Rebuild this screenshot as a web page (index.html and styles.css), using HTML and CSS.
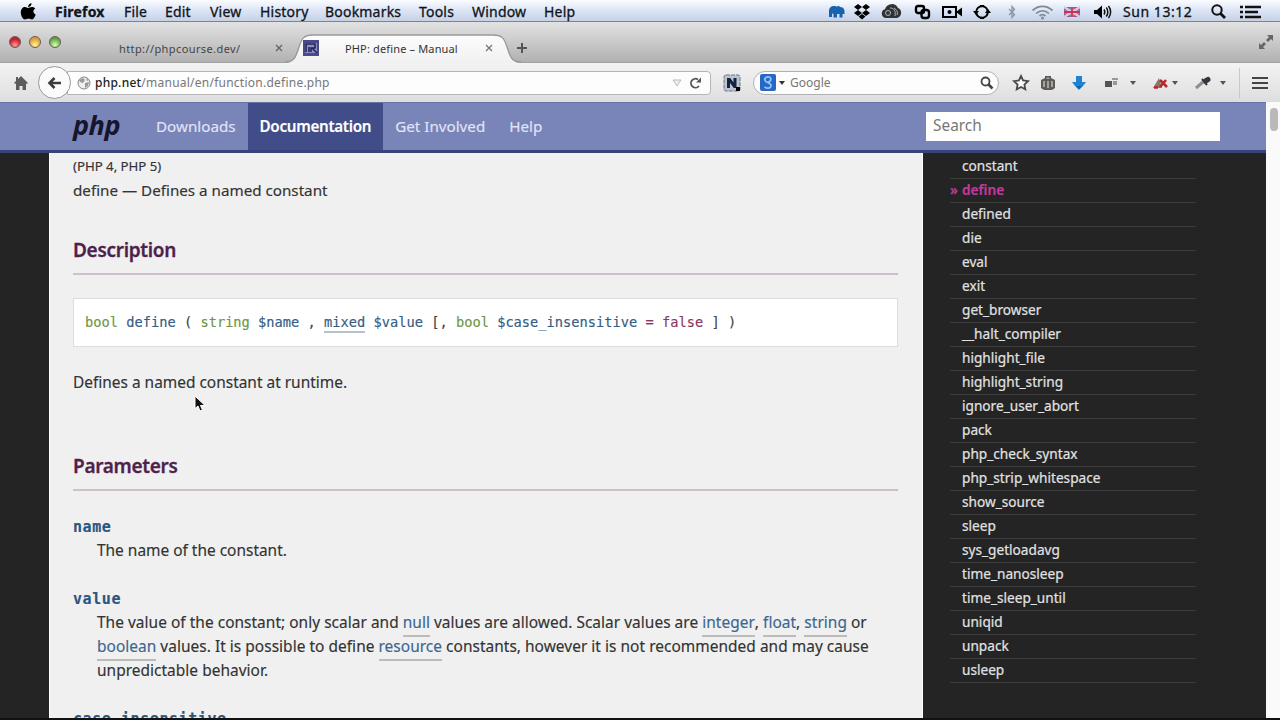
FILE: index.html
```html
<!DOCTYPE html>
<html lang="en">
<head>
<meta charset="UTF-8" />
<meta name="viewport" content="width=device-width, initial-scale=1" />
<title>PHP: define - Manual</title>
<link rel="stylesheet" href="styles.css">
</head>
<body>
<div class="screen">

  <!-- Mac menu bar -->
  <div class="menubar">
    <svg class="apple" width="16" height="18" viewBox="0 0 16 18"><path d="M8 5C9 5 10 4 12 4c1.500 0 2.600.7 3.200 1.600-2.600 1.600-2.200 5 .5 6C15 14 13.500 16.500 12 16.500c-1.300 0-1.800-.7-3.500-.7s-2.200.7-3.500.7C3 16.500.8 13 .8 9.500S2.800 4 5 4c1.500 0 2.200 1 3 1zM8 4c0-2 1.500-3.700 3.500-3.800C11.700 2.200 10 4 8 4z"/></svg>
    <nav class="menus">
      <b>Firefox</b><span>File</span><span>Edit</span><span>View</span><span>History</span><span>Bookmarks</span><span>Tools</span><span>Window</span><span>Help</span>
    </nav>
    <div class="status">
      <svg width="18" height="16" viewBox="0 0 18 16"><path fill="#1763ae" d="M1 13V7c0-3 2-5 5-5 1.500 0 2 .5 3 .5C10 1.500 11.500 2 12 3c3 0 4.500 2 4.500 4.500V10h-2v3.500h-3V10H9v3.500H5.500V10L4 9.500V13z"/></svg>
      <svg width="18" height="16" viewBox="0 0 18 16"><path d="M5 0l4 3-4 3-4-3zM13 0l4 3-4 3-4-3zM5 6l4 3-4 3-4-3zM13 6l4 3-4 3-4-3zM9 10l3.500 2.500L9 15.500l-3.500-3z"/></svg>
      <svg width="21" height="16" viewBox="0 0 21 16"><path fill="#333" d="M5 14a4.500 4.500 0 0 1-1-8.800A7 7 0 0 1 17 4a5.300 5.300 0 0 1-1 10z"/><circle cx="7" cy="9" r="2.500" fill="none" stroke="#aab4c6"/><path fill="none" stroke="#aab4c6" d="M9 4c4 0 6 3 5 8M13 4c3 2 4 4 3 7"/></svg>
      <svg width="17" height="16" viewBox="0 0 17 16"><g fill="none" stroke="#000" stroke-width="2.400"><rect x="2" y="2" width="8" height="7" rx="2"/><rect x="7.500" y="6" width="7.500" height="8" rx="2.500"/></g></svg>
      <svg width="21" height="16" viewBox="0 0 21 16"><rect x="1" y="3" width="13" height="10" fill="none" stroke="#000" stroke-width="2"/><circle cx="7.500" cy="8" r="2"/><path d="M14 8l6-4.500v9z"/></svg>
      <svg width="18" height="16" viewBox="0 0 18 16"><circle cx="9" cy="8" r="5.800" fill="none" stroke="#000" stroke-width="2"/><path d="M0 7h6l-3 4zM12 9h6l-3-4z"/><path d="M7 1h4v2H7zM7 13h4v2H7z"/></svg>
      <svg width="10" height="16" viewBox="0 0 10 16"><path fill="none" stroke="#8a94a5" stroke-width="1.300" d="M2 5l5.500 5.500L5 13.500V2.500l2.500 3L2 11"/></svg>
      <svg width="23" height="16" viewBox="0 0 23 16"><g fill="none" stroke="#7f8997" stroke-width="1.700"><path d="M1.500 6.500c6-5.500 14-5.500 20 0M5 9.500c4-3.700 9-3.700 13 0M8.500 12c2-1.800 4-1.800 6 0"/></g><circle cx="11.500" cy="14" r="1.500" fill="#7f8997"/></svg>
      <svg width="18" height="12" viewBox="0 0 18 12"><rect x="1" y="1" width="16" height="10" rx="1" fill="#71629c"/><path stroke="#e4c6d6" stroke-width="2.500" d="M1 1l16 10M17 1L1 11M9 1v10M1 6h16"/><path stroke="#cb3056" stroke-width="1.800" d="M9 1v10M1 6h16"/></svg>
      <svg width="19" height="16" viewBox="0 0 19 16"><path d="M1 6h3l5-4.500v13L4 10H1z"/><path fill="none" stroke="#111" stroke-width="1.500" d="M11 5.500c1 1.500 1 3.500 0 5M13.300 3.500c2 2.500 2 6.500 0 9M15.500 2c2.800 3.500 2.800 8.500 0 12"/></svg>
      <span class="clock">Sun 13:12</span>
      <svg width="17" height="17" viewBox="0 0 17 17"><circle cx="7" cy="7" r="4.700" fill="none" stroke="#111" stroke-width="2"/><path stroke="#111" stroke-width="2.800" d="M10.500 10.500l4.500 4.500"/></svg>
      <svg width="22" height="16" viewBox="0 0 22 16"><path stroke="#111" stroke-width="2.400" d="M0 3h3M5 3h16M0 8h3M5 8h13M0 13h3M5 13h16"/></svg>
    </div>
  </div>

  <!-- Tab strip -->
  <div class="tabstrip">
    <div class="lights"><i class="red"></i><i class="yellow"></i><i class="green"></i></div>
    <div class="tab-idle"><span>http://phpcourse.dev/</span><svg width="8" height="8" viewBox="0 0 8 8"><path stroke="#666" stroke-width="1.400" d="M1 1l6 6M7 1L1 7"/></svg></div>
    <div class="tab-active">
      <svg class="tab-shape" width="236" height="30" viewBox="0 0 236 30"><defs><linearGradient id="tabfill" x2="0" y2="1"><stop stop-color="#fcfcfc"/><stop offset="1" stop-color="#f1f1f1"/></linearGradient></defs><path fill="url(#tabfill)" d="M0 30C10 30 11 23 14 14 17 5 19 2 28 2H208c9 0 11 3 14 12 3 9 4 16 14 16z"/><path fill="none" stroke="#999" stroke-width="1.300" d="M0 29C10 29 11 23 14 14 17 5 19 2 28 2H208c9 0 11 3 14 12 3 9 4 15 14 15"/></svg>
      <div class="tab-content">
        <svg width="16" height="16" viewBox="0 0 16 16"><rect width="16" height="16" fill="#4a4a88"/><rect x="2" y="3" width="12" height="10" fill="#8c90c0"/><path fill="none" stroke="#25255a" stroke-width="1.600" d="M3 12V4h9v4H8v4M6 7v5M9 8l5 5"/></svg>
        <span class="tab-title">PHP: define – Manual</span>
        <svg width="8" height="8" viewBox="0 0 8 8"><path stroke="#777" stroke-width="1.300" d="M1 1l6 6M7 1L1 7"/></svg>
      </div>
    </div>
    <svg class="newtab" width="12" height="12" viewBox="0 0 12 12"><path stroke="#555" stroke-width="2" d="M6 1v10M1 6h10"/></svg>
    <svg class="fullscreen" width="16" height="16" viewBox="0 0 16 16"><path fill="#666" d="M15 1v6l-2-2-3 3-2-2 3-3-2-2zM1 15V9l2 2 3-3 2 2-3 3 2 2z"/></svg>
  </div>

  <!-- Navigation toolbar -->
  <div class="toolbar">
    <svg class="home" width="16" height="16" viewBox="0 0 16 16"><path fill="#5c5c5c" d="M8 1l7 7-1.200 1L13 8.300V15H9.500v-4h-3v4H3V8.300L2.200 9 1 8l2-2V2h2v2z"/></svg>
    <div class="back"><svg width="16" height="16" viewBox="0 0 16 16"><path fill="none" stroke="#3c3c3c" stroke-width="2.600" d="M7.500 3L2.500 8l5 5M3 8h11"/></svg></div>
    <div class="urlbar">
      <svg width="14" height="14" viewBox="0 0 14 14"><circle cx="7" cy="7" r="6" fill="#eee" stroke="#888"/><path fill="#999" d="M2 4l4-2 2 2-2 3-3-1zM8 7l4-1-1 4-3 2zM9 2l3 2-2 1z"/></svg>
      <span class="url"><b>php.net</b>/manual/en/function.define.php</span>
      <svg class="drop" width="10" height="8" viewBox="0 0 10 8"><path fill="#eee" stroke="#bbb" d="M1 1h8L5 7z"/></svg>
      <svg width="14" height="14" viewBox="0 0 14 14"><path fill="none" stroke="#555" stroke-width="1.800" d="M10 3.500a4.500 4.500 0 1 0 1 6.500"/><path fill="#555" d="M8 6.500L13 1.500v5z"/></svg>
    </div>
    <svg class="ext" width="18" height="18" viewBox="0 0 18 18"><rect x="1" y="1" width="16" height="16" rx="2" fill="#bcc4d1" stroke="#6d7482" stroke-dasharray="4 1"/><path fill="none" stroke="#142340" stroke-width="3" d="M5.500 4v10M12 4v10M6 5l6 8"/><path d="M13 13h4v4h-4z"/></svg>
    <div class="searchbar">
      <svg width="16" height="17" viewBox="0 0 16 17"><rect width="16" height="17" rx="2" fill="#2866c7"/><path fill="none" stroke="#8fc4f3" stroke-width="1.800" d="M10.500 3.500C7 2 4 4 5 6.500s6 2 6 5-4 3.500-6.500 1.500M9 3c3 1 2 5-1 5"/></svg>
      <svg width="6" height="4" viewBox="0 0 6 4"><path fill="#333" d="M0 0h6L3 4z"/></svg>
      <span>Google</span>
      <svg width="14" height="14" viewBox="0 0 14 14"><circle cx="5.500" cy="5.500" r="4" fill="none" stroke="#444" stroke-width="1.800"/><path stroke="#444" stroke-width="2.600" d="M8.500 8.500l4 4"/></svg>
    </div>
    <div class="tools">
      <svg width="18" height="18" viewBox="0 0 18 18"><path fill="#fafafa" stroke="#4a4a4a" stroke-width="1.800" d="M9 2l2.100 4.500 4.900.6-3.600 3.400.9 4.900L9 13l-4.300 2.400.9-4.900L2 7.100l4.900-.6z"/></svg>
      <svg width="16" height="16" viewBox="0 0 16 16"><path fill="#5d5b58" d="M5 1h6v2l4 2v8l-3 2H4l-3-2V5l4-2z"/><path fill="#a5a29d" d="M6.500 2.500h3V4h-3zM3 6h2v6H3zM7 6h2v7H7zM11 6h2v6h-2z"/></svg>
      <svg width="16" height="16" viewBox="0 0 16 16"><path fill="#1e83d2" d="M5 1h6v6h4l-3 4-4 4-4-4-3-4h4z"/><path fill="#1264a9" d="M5 11h6l-3 3z"/></svg>
      <svg width="16" height="14" viewBox="0 0 16 14"><path fill="#555" d="M1 5h7v6H1z"/><path fill="#999" d="M8 2h6v2H8zM9 5h4v4H9z"/></svg>
      <svg width="6" height="4" viewBox="0 0 6 4"><path fill="#555" d="M0 0h6L3 4z"/></svg>
      <svg width="18" height="15" viewBox="0 0 18 15"><path fill="#8a7667" d="M1 13L7 3l3 10z"/><path stroke="#b6272b" stroke-width="2.600" d="M8 5l7 7M14 5l-6 7M2 12.500h4"/></svg>
      <svg width="6" height="4" viewBox="0 0 6 4"><path fill="#555" d="M0 0h6L3 4z"/></svg>
      <svg width="18" height="16" viewBox="0 0 18 16"><path stroke="#8a8f97" stroke-width="3" d="M2 13l7-6"/><path stroke="#35373b" stroke-width="5" stroke-linecap="round" d="M11.500 6L14 4.500"/><path stroke="#35373b" stroke-width="2" d="M8 4l5 6"/></svg>
      <svg width="6" height="4" viewBox="0 0 6 4"><path fill="#555" d="M0 0h6L3 4z"/></svg>
      <i class="divider"></i>
      <svg width="16" height="14" viewBox="0 0 16 14"><path stroke="#444" stroke-width="2" d="M0 2h16M0 7h16M0 12h16"/></svg>
    </div>
  </div>

  <!-- Page -->
  <div class="viewport">
    <div class="site">
      <header class="site-header">
        <span class="logo">php</span>
        <a>Downloads</a>
        <a class="current">Documentation</a>
        <a>Get Involved</a>
        <a>Help</a>
        <div class="site-search">Search</div>
      </header>
      <div class="page">
        <main class="manual">
          <p class="version">(PHP 4, PHP 5)</p>
          <p class="purpose">define — Defines a named constant</p>
          <h3 class="description">Description</h3>
          <div class="synopsis"><span class="type">bool</span> <span class="name">define</span> ( <span class="type">string</span> <span class="param">$name</span> , <a>mixed</a> <span class="param">$value</span> [, <span class="type">bool</span> <span class="param">$case_insensitive</span> <span class="init">= false</span> ] )</div>
          <p class="runtime">Defines a named constant at runtime.</p>
          <h3 class="parameters">Parameters</h3>
          <dl>
            <dt>name</dt>
            <dd>The name of the constant.</dd>
            <dt>value</dt>
            <dd class="long">The value of the constant; only scalar and <a>null</a> values are allowed. Scalar values are <a>integer</a>, <a>float</a>, <a>string</a> or<br><a>boolean</a> values. It is possible to define <a>resource</a> constants, however it is not recommended and may cause<br>unpredictable behavior.</dd>
            <dt>case_insensitive</dt>
          </dl>
        </main>
        <aside class="sidebar">
          <ul>
            <li>constant</li>
            <li class="current">define</li>
            <li>defined</li>
            <li>die</li>
            <li>eval</li>
            <li>exit</li>
            <li>get_browser</li>
            <li>__halt_compiler</li>
            <li>highlight_file</li>
            <li>highlight_string</li>
            <li>ignore_user_abort</li>
            <li>pack</li>
            <li>php_check_syntax</li>
            <li>php_strip_whitespace</li>
            <li>show_source</li>
            <li>sleep</li>
            <li>sys_getloadavg</li>
            <li>time_nanosleep</li>
            <li>time_sleep_until</li>
            <li>uniqid</li>
            <li>unpack</li>
            <li>usleep</li>
          </ul>
        </aside>
      </div>
    </div>
    <div class="scrollbar"><i></i></div>
  </div>

  <svg class="cursor" width="12" height="18" viewBox="0 0 12 18"><path fill="#111" stroke="#fff" d="M1 1v12.500l3-2.500 2 5 2.500-1-2-4.500H11z"/></svg>
</div>
</body>
</html>
```
FILE: styles.css
```css
* {
  margin: 0;
  padding: 0;
  box-sizing: border-box;
}

body {
  width: 1280px;
  height: 720px;
  overflow: hidden;
  background: #111;
  font-family: "Noto Sans", "Open Sans", sans-serif;
}

svg {
  display: block;
  flex-shrink: 0;
}

.screen {
  position: relative;
  display: flex;
  flex-direction: column;
  height: 720px;
  padding-bottom: 2px;
}

/* Menu bar */
.menubar {
  display: flex;
  align-items: center;
  height: 22px;
  padding: 2px 18px 0 20px;
  background: linear-gradient(#fafcff 0%, #dce5f5 50%, #c6d1e5 100%);
  border-bottom: 1px solid #7b8492;
  font-size: 14px;
  color: #10141b;
}

.apple {
  width: 16px;
  margin-right: 19px;
}

.menus {
  display: grid;
  grid-template-columns: 69px 41px 45px 50px 65px 94px 53px 72px 60px;
  line-height: 20px;
  letter-spacing: 0.2px;
  white-space: nowrap;
  -webkit-text-stroke: 0.3px #10141b;
}

.status {
  display: grid;
  grid-template-columns: 25px 28px 33px 28px 31px 34px 24px 32px 30px 30px 87px 30px 22px;
  align-items: center;
  margin-left: auto;
}

.clock {
  line-height: 20px;
  letter-spacing: 0.55px;
  white-space: nowrap;
  -webkit-text-stroke: 0.3px #10141b;
}

/* Tab strip */
.tabstrip {
  display: flex;
  align-items: flex-end;
  height: 41px;
  background: linear-gradient(#e2e2e2, #b1b1b1);
  border-bottom: 1px solid #a0a0a0;
  font-size: 11px;
  color: #444;
}

.lights {
  display: flex;
  gap: 8px;
  padding: 0 0 14px 9px;
}

.lights i {
  width: 12px;
  height: 12px;
  border-radius: 50%;
  border: 1px solid #6b5a58;
}

.lights .red {
  background: radial-gradient(circle at 50% 80%, #ff9c9c, #c8212d 60%);
}

.lights .yellow {
  background: radial-gradient(circle at 50% 80%, #fff3a0, #dc9a35 70%);
}

.lights .green {
  background: radial-gradient(circle at 50% 80%, #dcffb0, #5d9f45 70%);
}

.tab-idle {
  display: flex;
  align-items: center;
  justify-content: space-between;
  width: 164px;
  height: 28px;
  margin-left: 58px;
}

.tab-idle span {
  letter-spacing: 0.4px;
}

.tab-active {
  position: relative;
  width: 236px;
  height: 30px;
  margin: 0 0 -1px 2px;
}

.tab-shape {
  position: absolute;
  top: 0;
  left: 0;
}

.tab-content {
  position: relative;
  display: flex;
  align-items: center;
  height: 30px;
  padding: 0 0 0 18px;
}

.tab-title {
  width: 140px;
  margin-left: 26px;
  letter-spacing: 0.15px;
  white-space: nowrap;
  color: #333;
}

.newtab {
  margin: 0 0 8px -5px;
}

.fullscreen {
  margin: 0 6px 12px auto;
}

/* Toolbar */
.toolbar {
  display: flex;
  align-items: center;
  height: 39px;
  background: linear-gradient(#f3f3f3, #dedede);
  font-size: 11.5px;
}

.home {
  margin-left: 13px;
}

.back {
  display: flex;
  align-items: center;
  justify-content: center;
  width: 33px;
  height: 33px;
  margin-left: 9px;
  background: #fbfbfb;
  border: 1px solid #999;
  border-radius: 50%;
  z-index: 1;
}

.urlbar {
  display: flex;
  align-items: center;
  width: 644px;
  height: 24px;
  margin-left: -4px;
  padding: 0 8px 0 9px;
  background: #fdfdfd;
  border: 1px solid #b5b5b5;
  border-radius: 0 4px 4px 0;
}

.url {
  margin-left: 4px;
  font-size: 12px;
  color: #777;
  letter-spacing: 0.24px;
}

.url b {
  color: #222;
  font-weight: 500;
}

.drop {
  margin: 0 6px 0 auto;
}

.ext {
  margin: 0 12px 0 12px;
}

.searchbar {
  display: flex;
  align-items: center;
  width: 246px;
  height: 24px;
  padding: 0 4px 0 6px;
  background: #fdfdfd;
  border: 1px solid #b0b0b0;
  border-radius: 12px;
  font-size: 12px;
  color: #777;
}

.searchbar svg + svg {
  margin: 0 5px 0 3px;
}

.searchbar svg:last-child {
  margin-left: auto;
}

.tools {
  display: grid;
  grid-template-columns: 28px 31px 33px 26px 22px 20px 22px 26px 19px 13px 16px;
  align-items: center;
  padding-left: 13px;
}

.divider {
  width: 1px;
  height: 30px;
  background: #c8c8c8;
}

/* Site */
.viewport {
  display: flex;
  height: 616px;
}

.site {
  width: 1266px;
  height: 616px;
  overflow: hidden;
  background: #242424;
}

.site-header {
  display: flex;
  align-items: center;
  height: 51px;
  padding-left: 73px;
  background: #7984b9;
  border-top: 1px solid #6873a9;
  border-bottom: 3px solid #38437b;
  font-size: 15.2px;
  color: #e0e4f5;
}

.logo {
  width: 71px;
  margin-top: -5px;
  font: italic bold 27px "Open Sans", sans-serif;
  letter-spacing: -0.5px;
  color: #15152b;
}

.site-header a {
  padding: 0 12px;
  line-height: 47px;
  white-space: nowrap;
  -webkit-text-stroke: 0.15px currentColor;
}

.site-header a.current {
  background: #414d88;
  color: #fff;
  font-weight: 600;
  letter-spacing: -0.3px;
}

.site-search {
  width: 294px;
  height: 29px;
  margin: 0 46px 0 auto;
  padding-left: 7px;
  background: #fff;
  line-height: 27px;
  font-size: 15.4px;
  color: #777;
}

.page {
  display: flex;
  height: 565px;
}

.manual {
  width: 874px;
  margin-left: 49px;
  padding: 0 24px 0 23px;
  background: #f0f0f0;
  border-left: 1px solid #fff;
  border-right: 1px solid #fff;
  overflow: hidden;
  font-size: 15.45px;
  line-height: 24px;
  color: #333;
  white-space: nowrap;
  -webkit-text-stroke: 0.15px currentColor;
}

.version {
  padding-top: 1px;
  font-size: 13.2px;
}

.purpose {
  font-size: 15.2px;
}

h3 {
  height: 37px;
  border-bottom: 2px solid #cdc0cc;
  font-size: 19px;
  font-weight: 600;
  letter-spacing: -0.3px;
  line-height: 24px;
  color: #4f1f4d;
  -webkit-text-stroke: 0.3px currentColor;
}

.description {
  margin-top: 36px;
}

.synopsis {
  height: 49px;
  margin-top: 23px;
  padding-left: 11px;
  background: #fff;
  border: 1px solid #ddd;
  font: 13.7px/47px "DejaVu Sans Mono", monospace;
  color: #444;
}

.synopsis .type {
  color: #6d9645;
}

.synopsis .name,
.synopsis .param,
.synopsis a {
  color: #365c83;
}

.synopsis .init {
  color: #8a3860;
}

.synopsis a {
  padding-bottom: 1px;
  border-bottom: 2px solid #b5c2ce;
}

.runtime {
  margin-top: 23px;
}

.parameters {
  margin-top: 60px;
}

dl {
  margin-top: -1px;
}

dt {
  height: 24px;
  margin-top: 24px;
  font: bold 15px/26px "DejaVu Sans Mono", monospace;
  letter-spacing: 0.57px;
  color: #2c567e;
}

dd {
  padding-left: 24px;
}

dd.long {
  letter-spacing: 0.035px;
}

dd a {
  display: inline-block;
  height: 27px;
  margin-bottom: -3px;
  border-bottom: 2px solid #bbb;
  color: #3c6691;
}

/* Function list */
.sidebar {
  width: 343px;
  padding: 2px 70px 0 27px;
  font-size: 13.65px;
  color: #e2e2e2;
  -webkit-text-stroke: 0.2px currentColor;
}

.sidebar ul {
  list-style: none;
}

.sidebar li {
  height: 24px;
  padding-left: 12px;
  border-bottom: 1px solid #3b3b3b;
  line-height: 22px;
}

.sidebar li.current {
  padding-left: 0;
  color: #c5399b;
  font-weight: 600;
}

.sidebar li.current::before {
  content: "»";
  display: inline-block;
  width: 12px;
}

.scrollbar {
  width: 14px;
  padding: 6px 0 0 4px;
  background: #fafafa;
}

.scrollbar i {
  display: block;
  width: 8px;
  height: 23px;
  border-radius: 4px;
  background: #b9b9b9;
}

.cursor {
  position: absolute;
  left: 194px;
  top: 395px;
}
```
